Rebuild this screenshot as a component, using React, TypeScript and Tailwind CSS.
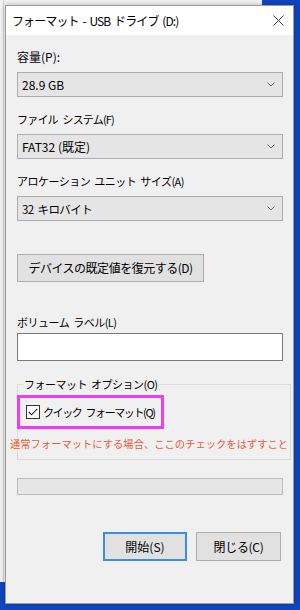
import React from 'react'

// フォーマット ダイアログ (Windows 10 風)

const font = "font-['Noto_Sans_CJK_JP',sans-serif]"

const Chevron = () => (
  <svg width="8" height="5" viewBox="0 0 8 5" className="shrink-0">
    <polyline points="0.5,0.5 4,4 7.5,0.5" fill="none" stroke="#6d6d6d" strokeWidth="1" />
  </svg>
)

const Select: React.FC<{ value: string; track?: string }> = ({ value, track = 'text-[12px]' }) => (
  <div className="mt-[7px] flex h-[25px] w-[266px] items-center justify-between border border-[#adadad] bg-[#e5e5e5] pl-[4px] pr-[7px] leading-[16px]">
    <span className={'whitespace-nowrap ' + track}>{value}</span>
    <Chevron />
  </div>
)

// カナの多いラベルは少し詰めて表示
const Label: React.FC<{ text: string; className?: string }> = ({ text, className = '' }) => (
  <div className={'h-[16px] whitespace-nowrap leading-[16px] ' + className}>{text}</div>
)

export default function App() {
  return (
    <div className={'relative h-[610px] w-[300px] overflow-hidden bg-[#0f46c2] text-black ' + font}>
      {/* 背後のウィンドウ */}
      <div className="absolute left-0 top-0 h-[582px] w-[262px] bg-[#f3f3f3]">
        <div className="ml-[3px] h-full w-px bg-[#d6d6d6]" />
      </div>

      {/* ダイアログ */}
      <div className="relative ml-[5px] mt-[5px] flex h-[599px] w-[289px] flex-col border border-[#9c9c9c] bg-[#f0f0f0] shadow-[0_0_6px_rgba(0,0,0,0.25)]">
        {/* タイトルバー */}
        <div className="flex h-[29px] items-center justify-between bg-white pl-[6px] pr-[9px]">
          <span className="whitespace-nowrap text-[12px] leading-[16px] tracking-[-0.9px] [word-spacing:2px]">
            フォーマット - USB ドライブ (D:)
          </span>
          <svg width="11" height="11" viewBox="0 0 11 11">
            <path d="M0.5 0.5 L10.5 10.5 M10.5 0.5 L0.5 10.5" stroke="#3a3a3a" strokeWidth="1" />
          </svg>
        </div>

        {/* 本体 */}
        <div className="flex flex-col px-[11px]">
          <Label text="容量(P):" className="mt-[14px] text-[12px]" />
          <Select value="28.9 GB" />

          <Label text="ファイル システム(F)" className="mt-[14px] text-[11px] tracking-[-0.8px] [word-spacing:3px]" />
          <Select value="FAT32 (既定)" />

          <Label text="アロケーション ユニット サイズ(A)" className="mt-[14px] text-[11px] tracking-[-0.5px] [word-spacing:2px]" />
          <Select value="32 キロバイト" track="text-[11.5px] tracking-[-0.6px] [word-spacing:2px]" />

          <button className="mt-[33px] flex h-[28px] w-[187px] items-center justify-center border border-[#adadad] bg-[#e1e1e1] text-[12px] leading-[16px] tracking-[-0.5px]">
            デバイスの既定値を復元する(D)
          </button>

          <Label text="ボリューム ラベル(L)" className="mt-[32px] text-[11px] tracking-[-0.5px] [word-spacing:2px]" />
          <div className="mt-[3px] h-[28px] w-[266px] border border-[#7a7a7a] bg-white" />

          {/* フォーマット オプション */}
          <fieldset className="mt-[15px] h-[84px] w-[266px] border border-[#dcdcdc]">
            <legend className="ml-[5px] whitespace-nowrap px-[1px] text-[11px] leading-[16px] tracking-[-0.5px] [word-spacing:2px]">
              フォーマット オプション(O)
            </legend>
            <div className="-ml-[1px] mt-[3px] flex h-[34px] w-[147px] items-center border-[3px] border-[#ef3cef] pl-[6px]">
              <div className="flex h-[14px] w-[14px] shrink-0 items-center justify-center border border-[#333] bg-white">
                <svg width="10" height="8" viewBox="0 0 10 8">
                  <polyline points="0.8,4 3.6,6.8 9.2,0.8" fill="none" stroke="#222" strokeWidth="1.1" />
                </svg>
              </div>
              <span className="ml-[3px] whitespace-nowrap text-[11px] leading-[16px] tracking-[-1.4px] [word-spacing:3px]">
                クイック フォーマット(Q)
              </span>
            </div>
            <div className="-ml-[8px] mt-[8px] w-[280px] whitespace-nowrap text-[10.3px] leading-[14px] text-[#ee5a3a]">
              通常フォーマットにする場合、ここのチェックをはずすこと
            </div>
          </fieldset>

          {/* 進捗バー */}
          <div className="mt-[18px] h-[17px] w-[266px] border border-[#bcbcbc] bg-[#e6e6e6]" />

          {/* ボタン */}
          <div className="mt-[37px] flex w-[266px] justify-end gap-[9px] pr-[2px]">
            <button className="flex h-[29px] w-[84px] items-center justify-center border-2 border-[#3c8fd8] bg-[#e1e1e1] text-[12px] leading-[16px]">
              開始(S)
            </button>
            <button className="flex h-[29px] w-[85px] items-center justify-center border border-[#adadad] bg-[#e1e1e1] text-[12px] leading-[16px] tracking-[-0.3px]">
              閉じる(C)
            </button>
          </div>
        </div>
      </div>
    </div>
  )
}
